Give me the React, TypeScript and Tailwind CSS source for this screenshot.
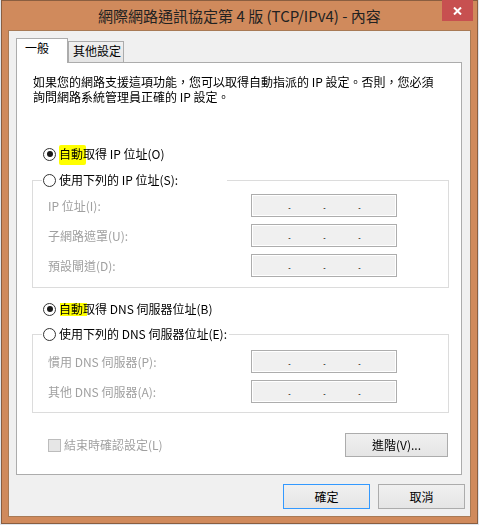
import type { ReactNode } from "react";

function Radio({ checked = false }: { checked?: boolean }) {
  return (
    <span className="flex h-[13px] w-[13px] shrink-0 items-center justify-center rounded-full border border-[#333333] bg-white">
      {checked && <span className="h-[6px] w-[6px] rounded-full bg-[#1a1a1a]" />}
    </span>
  );
}

function Highlight({ children, box }: { children: ReactNode; box: string }) {
  return (
    <span className="relative inline-block h-[16px]">
      {children}
      <span className={`absolute bg-[#ffff00] mix-blend-multiply ${box}`} />
    </span>
  );
}

function IpBox() {
  const dot =
    "h-px w-[3px] bg-[linear-gradient(to_right,#e8a870_33%,#555555_33%,#555555_66%,#7fbfef_66%)]";
  return (
    <div className="flex h-[23px] w-[146px] shrink-0 items-start gap-[32px] border border-[#adadad] bg-[#f0f0f0] pl-[36px] pt-[13px] shadow-[inset_0_0_0_1px_#ffffff]">
      <span className={dot} />
      <span className={dot} />
      <span className={dot} />
    </div>
  );
}

function FieldRow({ label }: { label: string }) {
  return (
    <div className="flex h-[23px] items-center">
      <span className="w-[203px] pt-[1px] text-[#a0a0a0]">{label}</span>
      <IpBox />
    </div>
  );
}

function Group({ legend, legendClass, rows, pt, pb }: {
  legend: ReactNode;
  legendClass: string;
  rows: string[];
  pt: string;
  pb: string;
}) {
  return (
    <fieldset className="ml-[15px] w-[417px] border border-[#dcdcdc]">
      <legend className={`ml-[9px] flex h-[16px] items-center gap-[3px] whitespace-nowrap pl-[1px] ${legendClass}`}>
        <Radio />
        <span>{legend}</span>
      </legend>
      <div className={`flex flex-col gap-[7px] pl-[15px] ${pt} ${pb}`}>
        {rows.map((r) => (
          <FieldRow key={r} label={r} />
        ))}
      </div>
    </fieldset>
  );
}

function Button({ children, focused = false, className = "" }: {
  children: ReactNode;
  focused?: boolean;
  className?: string;
}) {
  return (
    <button
      className={`flex items-center justify-center border bg-gradient-to-b from-[#f0f0f0] to-[#e5e5e5] text-black ${
        focused ? "border-[#3399ff]" : "border-[#acacac]"
      } ${className}`}
    >
      {children}
    </button>
  );
}

export default function App() {
  return (
    <div className="h-[525px] w-[479px] bg-[#dfe6ee] font-['Noto_Sans_CJK_TC','Noto_Sans_CJK_JP',sans-serif] text-[12px] leading-[16px] text-black">
      <div className="ml-px flex h-[524px] w-[477px] flex-col border border-[#8a5e40] bg-[#d08a5c]">
        {/* title bar */}
        <div className="relative flex h-[29px] shrink-0 items-center justify-center">
          <span className="pt-[1px] text-[15px] leading-[20px] text-[#222222]">
            網際網路通訊協定第 4 版 (TCP/IPv4) - 內容
          </span>
          <button className="absolute right-[4px] top-[-1px] flex h-[21px] w-[31px] items-center justify-center bg-[#c75050]">
            <svg width="9" height="8" viewBox="0 0 9 8">
              <path d="M1 0.5 L8 7.5 M8 0.5 L1 7.5" stroke="#ffffff" strokeWidth="2" />
            </svg>
          </button>
        </div>

        {/* client area */}
        <div className="mx-[6px] mb-[6px] flex flex-1 flex-col border border-[#a87a55] bg-[#f0f0f0]">
          {/* tabs */}
          <div className="ml-[7px] mt-[7px] flex items-end">
            <div className="relative z-10 -mb-px h-[25px] w-[52px] border border-b-0 border-[#acacac] bg-white pl-[8px] pt-[1px]">
              一般
            </div>
            <div className="h-[21px] w-[56px] border border-b-0 border-[#acacac] bg-gradient-to-b from-[#f0f0f0] to-[#e5e5e5] pl-[4px] pt-[1px]">
              其他設定
            </div>
          </div>

          <div className="relative z-0 ml-[7px] mr-[8px] flex flex-col border border-[#acacac] bg-white pb-[17px]">
            <p className="pl-[16px] pt-[11px] leading-[15px]">
              如果您的網路支援這項功能，您可以取得自動指派的 IP 設定。否則，您必須
              <br />
              詢問網路系統管理員正確的 IP 設定。
            </p>

            <div className="ml-[26px] mt-[42px] flex h-[16px] items-center gap-[3px]">
              <Radio checked />
              <span>
                <Highlight box="left-0 top-[-1px] h-[20px] w-[27px] rounded-[2px]">自動</Highlight>
                取得 IP 位址(O)
              </span>
            </div>

            <div className="mt-[10px]">
              <Group
                legend="使用下列的 IP 位址(S):"
                legendClass="w-[185px]"
                rows={["IP 位址(I):", "子網路遮罩(U):", "預設閘道(D):"]}
                pt="pt-[6px]"
                pb="pb-[10px]"
              />
            </div>

            <div className="ml-[26px] mt-[13px] flex h-[16px] items-center gap-[3px]">
              <Radio checked />
              <span>
                <Highlight box="left-px top-[2px] h-[13px] w-[27px]">自動</Highlight>
                取得 DNS 伺服器位址(B)
              </span>
            </div>

            <div className="mt-[9px]">
              <Group
                legend="使用下列的 DNS 伺服器位址(E):"
                legendClass="pr-[2px]"
                rows={["慣用 DNS 伺服器(P):", "其他 DNS 伺服器(A):"]}
                pt="pt-[8px]"
                pb="pb-[9px]"
              />
            </div>

            <div className="ml-[31px] mr-[13px] mt-[20px] flex h-[24px] items-center justify-between">
              <div className="flex items-center gap-[3px]">
                <span className="h-[13px] w-[13px] border border-[#bcbcbc] bg-[#e6e6e6]" />
                <span className="text-[#a0a0a0]">結束時確認設定(L)</span>
              </div>
              <Button className="h-[24px] w-[103px]">進階(V)...</Button>
            </div>
          </div>

          <div className="mr-[5px] mt-[9px] flex justify-end gap-[8px]">
            <Button focused className="h-[25px] w-[87px]">
              確定
            </Button>
            <Button className="h-[25px] w-[87px]">取消</Button>
          </div>
        </div>
      </div>
    </div>
  );
}
